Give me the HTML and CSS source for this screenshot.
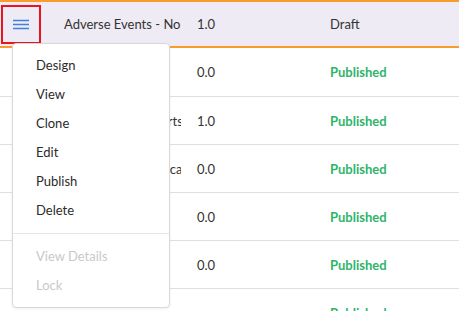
FILE: index.html
```html
<!DOCTYPE html>
<html>
<head>
<meta charset="utf-8">
<link rel="stylesheet" href="styles.css">
</head>
<body>
<div class="table">
  <div class="row head">
    <div class="cell c-act">
      <button class="menu-btn" aria-label="Actions">
        <svg width="18" height="12" viewBox="0 0 18 12"><path d="M1 1.5H17M1 5.5H17M1 9.5H17" stroke="#3f7fe0" stroke-width="1.6" fill="none"/></svg>
      </button>
    </div>
    <div class="cell c-name">Adverse Events - Non-Serious</div>
    <div class="cell c-ver">1.0</div>
    <div class="cell c-status">Draft</div>
  </div>
  <div class="row">
    <div class="cell c-act"></div>
    <div class="cell c-name">Demographics</div>
    <div class="cell c-ver">0.0</div>
    <div class="cell c-status pub">Published</div>
  </div>
  <div class="row">
    <div class="cell c-act"></div>
    <div class="cell c-name">Safety Event Reports</div>
    <div class="cell c-ver">1.0</div>
    <div class="cell c-status pub">Published</div>
  </div>
  <div class="row">
    <div class="cell c-act"></div>
    <div class="cell c-name">Concomitant Medications</div>
    <div class="cell c-ver">0.0</div>
    <div class="cell c-status pub">Published</div>
  </div>
  <div class="row">
    <div class="cell c-act"></div>
    <div class="cell c-name">Vital Signs</div>
    <div class="cell c-ver">0.0</div>
    <div class="cell c-status pub">Published</div>
  </div>
  <div class="row">
    <div class="cell c-act"></div>
    <div class="cell c-name">Lab Results</div>
    <div class="cell c-ver">0.0</div>
    <div class="cell c-status pub">Published</div>
  </div>
  <div class="row">
    <div class="cell c-act"></div>
    <div class="cell c-name"></div>
    <div class="cell c-ver"></div>
    <div class="cell c-status pub">Published</div>
  </div>
</div>
<ul class="dropdown">
  <li class="item">Design</li>
  <li class="item">View</li>
  <li class="item">Clone</li>
  <li class="item">Edit</li>
  <li class="item">Publish</li>
  <li class="item">Delete</li>
  <li class="divider"></li>
  <li class="item disabled">View Details</li>
  <li class="item disabled">Lock</li>
</ul>
</body>
</html>
```
FILE: styles.css
```css
* { box-sizing: border-box; }
html, body { margin: 0; padding: 0; background: #fff; overflow: hidden; }
body {
  font-family: "Source Sans Pro", Lato, "Open Sans", sans-serif;
  font-size: 13px;
  color: #333;
  width: 459px;
  height: 311px;
  position: relative;
}
.table { display: flex; flex-direction: column; }
.row {
  display: grid;
  grid-template-columns: 52px 133px 133px 1fr;
  height: 48px;
  border-top: 1px solid #e0e0e0;
  align-items: center;
}
.row.head {
  background: #eeebf4;
  border-top: 2px solid #f89c2e;
  border-bottom: 2px solid #f89c2e;
}
.row.head + .row { border-top: none; }
.cell {
  padding-left: 12px;
  white-space: nowrap;
  overflow: hidden;
}
.c-name { margin-right: 4px; text-overflow: clip; }
.c-act { padding-left: 1px; overflow: visible; }
.pub { color: #2fb46a; font-weight: 700; }
.menu-btn {
  width: 40px;
  height: 39px;
  border: 2px solid #e8141f;
  background: transparent;
  padding: 0;
  margin-top: 1px;
  display: flex;
  align-items: center;
  justify-content: center;
}
.menu-btn svg { display: block; margin-top: 1px; }
.dropdown {
  position: absolute;
  left: 12px;
  top: 43px;
  width: 158px;
  height: 265px;
  margin: 0;
  padding: 7px 0;
  list-style: none;
  background: #fff;
  border: 1px solid #d8d8d8;
  border-radius: 4px;
  box-shadow: 0 1px 3px rgba(0,0,0,0.06);
}
.item {
  height: 29px;
  line-height: 29px;
  padding-left: 23px;
  color: #2b2b2b;
}
.item.disabled { color: #c9c9c9; }
.divider {
  height: 1px;
  background: #e6e6e6;
  margin: 8px 0;
}
```
